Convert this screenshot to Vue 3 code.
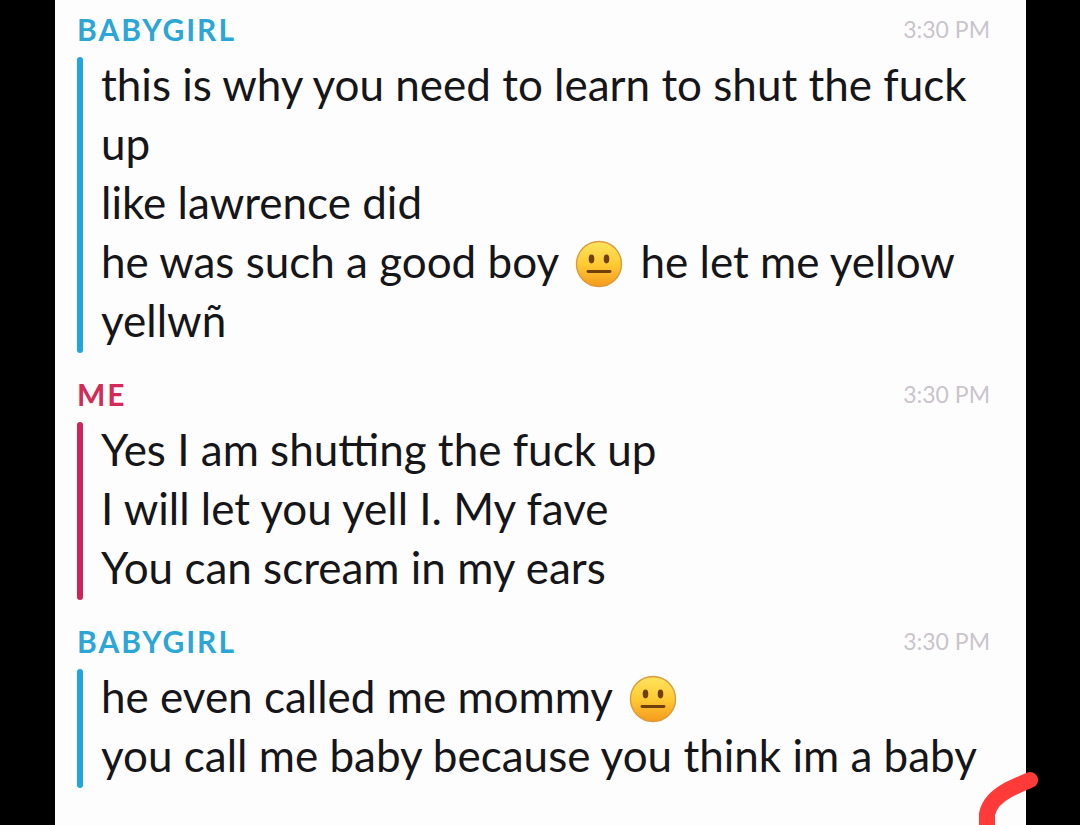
<script setup>
const conversation = [
  {
    sender: 'Babygirl',
    tone: 'blue',
    time: '3:30 PM',
    lines: [
      ['this is why you need to learn to shut the fuck up'],
      ['like lawrence did'],
      ['he was such a good boy ', { face: true }, ' he let me yellow'],
      ['yellwñ'],
    ],
  },
  {
    sender: 'Me',
    tone: 'red',
    time: '3:30 PM',
    lines: [
      ['Yes I am shutting the fuck up'],
      ['I will let you yell I. My fave'],
      ['You can scream in my ears'],
    ],
  },
  {
    sender: 'Babygirl',
    tone: 'blue',
    time: '3:30 PM',
    lines: [
      ['he even called me mommy ', { face: true }],
      ['you call me baby because you think im a baby'],
    ],
  },
]
</script>

<template>
  <div class="stage">
    <svg class="defs" width="0" height="0" aria-hidden="true">
      <defs>
        <linearGradient id="face-fill" x1="0" y1="0" x2="0" y2="1">
          <stop offset="0" stop-color="#ffe45e" />
          <stop offset="0.5" stop-color="#ffcb35" />
          <stop offset="1" stop-color="#f59a1c" />
        </linearGradient>
      </defs>
    </svg>
    <main class="chat">
      <section v-for="(group, g) in conversation" :key="g" class="group" :class="group.tone">
        <header class="head">
          <h2 class="sender">{{ group.sender }}</h2>
          <time class="time">{{ group.time }}</time>
        </header>
        <div class="messages">
          <p v-for="(line, l) in group.lines" :key="l" class="message">
            <template v-for="(part, p) in line" :key="p">
              <svg v-if="part.face" class="face" viewBox="0 0 48 48" role="img" aria-label="neutral face">
                <circle cx="24" cy="24" r="22.5" fill="url(#face-fill)" stroke="#dc9a3c" stroke-width="1.4" />
                <ellipse cx="16.5" cy="19" rx="2.8" ry="4.4" fill="#70400c" />
                <ellipse cx="31.5" cy="19" rx="2.8" ry="4.4" fill="#70400c" />
                <path d="M13 31.5H35" stroke="#70400c" stroke-width="2.8" stroke-linecap="round" />
              </svg>
              <template v-else>{{ part }}</template>
            </template>
          </p>
        </div>
      </section>
    </main>
    <svg class="scribble" viewBox="0 0 64 60" aria-hidden="true">
      <path d="M11 66V49C13 39 21 31 32 25C40 21 47 18 54 15" fill="none" stroke="#ff3a38" stroke-width="16" stroke-linecap="round" stroke-linejoin="round" />
    </svg>
  </div>
</template>

<style>
body {
  background: #000;
}
</style>

<style scoped>
.stage {
  position: relative;
  box-sizing: border-box;
  min-height: 100vh;
  padding: 0 54px 0 55px;
  display: flex;
  overflow: hidden;
  background: #000;
  font-family: Lato, "Liberation Sans", sans-serif;
}

.defs {
  position: absolute;
}

.chat {
  flex: 1;
  min-width: 0;
  padding: 13px 24px 36px 22px;
  background: #fefdfe;
}

.group + .group {
  margin-top: 25px;
}

.head {
  display: flex;
  align-items: center;
  justify-content: space-between;
  height: 32px;
  margin-bottom: 10px;
  padding-right: 12px;
}

.sender {
  margin: 0;
  font-size: 30px;
  line-height: 32px;
  font-weight: 700;
  letter-spacing: 2px;
  text-transform: uppercase;
}

.time {
  font-size: 23px;
  line-height: 32px;
  color: #c9c5cb;
}

.messages {
  position: relative;
  padding: 0 0 3px 24px;
}

.messages::before {
  content: "";
  position: absolute;
  inset: 2px auto 0 0;
  width: 6px;
  border-radius: 3px;
}

.blue .sender {
  color: #2ba6d6;
}

.blue .messages::before {
  background: #20a5dd;
}

.red .sender {
  color: #d42a58;
}

.red .messages::before {
  background: #d12359;
}

.message {
  margin: 0;
  font-size: 44px;
  line-height: 59px;
  color: #161518;
}

.face {
  width: 48px;
  height: 48px;
  margin: -4px 6px;
  vertical-align: -6px;
}

.scribble {
  position: absolute;
  right: 40px;
  bottom: 0;
  width: 64px;
  height: 60px;
}
</style>
